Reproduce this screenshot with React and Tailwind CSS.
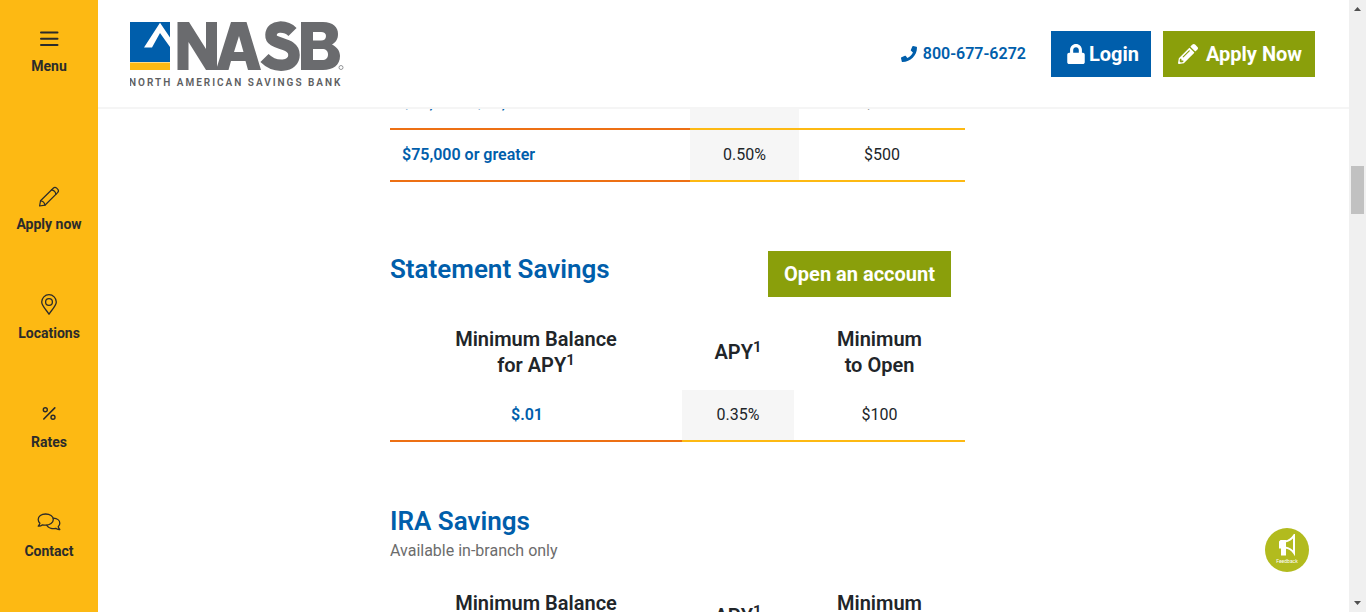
import React from "react";
import { FaLock, FaPhone, FaPencilAlt } from "react-icons/fa";

const line = { fill: "none", stroke: "currentColor", strokeWidth: 1.3, strokeLinejoin: "round", strokeLinecap: "round" };

function MenuIcon() {
  return (
    <svg className="h-6 w-6" viewBox="0 0 24 24" {...line} strokeWidth="2" aria-hidden="true">
      <path d="M4 5.5H20.5M4 11.8H20.5M4 18H20.5" />
    </svg>
  );
}

function PencilIcon() {
  return (
    <svg className="h-6 w-6" viewBox="0 0 24 24" {...line} strokeWidth="1.200" aria-hidden="true">
      <path d="M2.600 22l.9-5.200L16.200 4.200c1-1 2.500-1 3.500 0l.9.900c1 1 1 2.500 0 3.500L7.900 21.200z" />
      <path d="M14.500 5.900c2.200.3 4 2.100 4.400 4.400M3.500 16.800c2.300.2 4.100 2 4.400 4.400" />
    </svg>
  );
}

function PinIcon() {
  return (
    <svg className="h-6 w-6" viewBox="0 0 24 24" {...line} aria-hidden="true">
      <path d="M12 21.200C10.500 18.400 4.700 12.900 4.700 9a7.300 7.300 0 0 1 14.600 0C19.300 12.900 13.500 18.400 12 21.200z" />
      <circle cx="12" cy="9" r="3.400" />
    </svg>
  );
}

function PercentIcon() {
  return (
    <svg className="h-6 w-6" viewBox="0 0 24 24" {...line} strokeWidth="1.4" aria-hidden="true">
      <path d="M17.800 5.900L6.800 17" strokeWidth="1.600" />
      <circle cx="8.300" cy="7.700" r="2" />
      <circle cx="16" cy="15.200" r="2" />
    </svg>
  );
}

function ChatIcon() {
  return (
    <svg className="h-6 w-6" viewBox="0 1 24 24" {...line} aria-hidden="true">
      <path d="M8.600 4C4.400 4 1.200 6.400 1.200 9.500c0 1.500.7 2.700 1.700 3.700-.2 1.200-.9 2.100-1.700 2.900 1.500.2 3.200-.4 4.300-1.300 1 .3 2 .4 3.100.4 4.300 0 7.700-2.500 7.700-5.700S12.900 4 8.600 4z" />
      <path d="M16.500 8.200c3.600.2 6.300 2.300 6.300 5.100 0 1.300-.6 2.500-1.600 3.400.2 1.100.8 2 1.600 2.800-1.500.2-3-.3-4.100-1.200-3.600.9-7.400-.4-8.900-2.900" />
    </svg>
  );
}

const navItems = [
  { label: "Apply now", Icon: PencilIcon },
  { label: "Locations", Icon: PinIcon },
  { label: "Rates", Icon: PercentIcon },
  { label: "Contact", Icon: ChatIcon },
];

const navClass = "flex h-[109px] w-full flex-col items-center pt-[27px] text-sm font-bold leading-5 text-[#2b2b2b]";

function Sidebar() {
  return (
    <nav className="flex w-[98px] shrink-0 flex-col bg-[#fdb913]" aria-label="Main">
      <button type="button" className={navClass}>
        <MenuIcon />
        <span className="mt-[5px]">Menu</span>
      </button>
      <div className="mt-12">
        {navItems.map(({ label, Icon }) => (
          <a key={label} href="#" className={navClass}>
            <Icon />
            <span className="mt-[6px]">{label}</span>
          </a>
        ))}
      </div>
    </nav>
  );
}

function Logo() {
  return (
    <svg className="h-[68px] w-[216px]" viewBox="0 0 216 68" role="img" aria-label="NASB North American Savings Bank">
      <rect x="0" y="2" width="40" height="40" fill="#005eab" />
      <rect x="0" y="42.500" width="40" height="7.500" fill="#fdb913" />
      <path d="M14 27.500L30 2.700L40 17.500V27L30 13L22 27.500z" fill="#fff" />
      <g fill="#6a6b6e">
        <path d="M47.500 2H59L76 29V2H87V50H76L58.500 22V50H47.500z" />
        <path fillRule="evenodd" d="M101 2H116.500L131 50H118L115.500 41H101L98.500 50H86zM109 16L104 32H113.500z" />
        <path fillRule="evenodd" d="M171 2H193C203 2 208 7 208 14C208 19 206 22 202 24.500C207 27 210 31 210 36C210 45 203 50 193 50H171zM183 12V20.500H191C194 20.500 196 19 196 16C196 13.500 194 12 191 12zM183 29V40H192C196 40 198 38 198 34.500C198 31 196 29 192 29z" />
      </g>
      <path d="M162.500 12C156 5.500 141.500 4.500 141 15C140.500 26 164 21 164 35C164 47.500 145 48.500 134.500 38" fill="none" stroke="#6a6b6e" strokeWidth="11.500" />
      <circle cx="211" cy="47.500" r="2" fill="none" stroke="#8a8b8e" strokeWidth="0.900" />
      <text x="-1" y="66" fill="#5d5e61" className="font-['Roboto',sans-serif] text-[10px] font-semibold tracking-[0.2em]">
        NORTH AMERICAN SAVINGS BANK
      </text>
    </svg>
  );
}

function Header() {
  return (
    <header className="flex h-[109px] shrink-0 items-center border-b-2 border-[#f5f5f5] bg-white pl-8 pr-[34px]">
      <a href="#" className="block"><Logo /></a>
      <a href="tel:8006776272" className="ml-auto flex items-center gap-1.5 font-semibold text-[#005eab]">
        <FaPhone className="h-4 w-4" aria-hidden="true" />
        800-677-6272
      </a>
      <button type="button" className="ml-[25px] flex h-[46px] items-center bg-[#005eab] pl-4 pr-3 text-xl font-bold text-white">
        <FaLock className="mr-1 h-5 w-[18px]" aria-hidden="true" />
        Login
      </button>
      <button type="button" className="ml-3 flex h-[46px] items-center bg-[#8a9f0b] pl-[15px] pr-[13px] text-xl font-bold text-white">
        <FaPencilAlt className="mr-2 h-5 w-5" aria-hidden="true" />
        Apply Now
      </button>
    </header>
  );
}

function Row({ tier, apy, open, left }) {
  const tierClass = "border-b-2 border-[#ed7014] pl-3 font-semibold text-[#005eab]";
  return (
    <tr className="h-[52px]">
      <td className={tierClass + (left ? " pr-3 text-left" : " pr-[30px]")}>{tier}</td>
      <td className="border-b-2 border-[#fdb913] bg-[#f6f6f6]">{apy}</td>
      <td className="border-b-2 border-[#fdb913]">{open}</td>
    </tr>
  );
}

function RateTable({ rows }) {
  return (
    <table className="w-full table-fixed border-separate border-spacing-0 text-center">
      <colgroup>
        <col className="w-[292px]" />
        <col className="w-[112px]" />
        <col />
      </colgroup>
      <thead>
        <tr className="h-[76px] text-xl leading-[26px]">
          <th className="font-semibold">Minimum Balance<br />for APY<sup className="text-[15px]">1</sup></th>
          <th className="font-semibold">APY<sup className="text-[15px]">1</sup></th>
          <th className="font-semibold">Minimum<br />to Open</th>
        </tr>
      </thead>
      <tbody>{rows.map((r) => <Row key={r.tier} {...r} />)}</tbody>
    </table>
  );
}

function Feedback() {
  return (
    <button type="button" className="absolute bottom-10 right-10 flex h-11 w-11 flex-col items-center rounded-full bg-[#b2bb1e] pt-1.5 text-white">
      <svg className="h-6 w-5" viewBox="0 0 20 24" aria-hidden="true">
        <path d="M8 7.500C12 7 15 4.500 17 1.500V19C15 16 12 14 8 13.500" fill="none" stroke="#fff" strokeWidth="2" />
        <path d="M3.500 6H9V21.500H4V14.500H2V7.500z" fill="#fff" />
      </svg>
      <span className="text-[5px] leading-[6px]">Feedback</span>
    </button>
  );
}

function ScrollTrack() {
  return (
    <div className="flex w-[17px] shrink-0 flex-col items-center justify-between bg-[#f0f0f0] py-[7px]" aria-hidden="true">
      <svg className="h-1 w-[7px]" viewBox="0 0 7 4"><path d="M0 4L3.500 0L7 4z" fill="#505050" /></svg>
      <div className="flex w-[13px] flex-1 flex-col">
        <div className="grow-[155]" />
        <div className="h-12 bg-[#c1c1c1]" />
        <div className="grow-[387]" />
      </div>
      <svg className="h-1 w-[7px]" viewBox="0 0 7 4"><path d="M0 0L3.500 4L7 0z" fill="#505050" /></svg>
    </div>
  );
}

export default function App() {
  return (
    <div className="flex h-screen overflow-hidden bg-white font-['Roboto',sans-serif] text-base text-[#212529]">
      <Sidebar />
      <div className="relative flex min-w-0 flex-1 flex-col">
        <Header />
        <main className="min-h-0 flex-1 overflow-hidden">
          <div className="mx-auto max-w-[667px]">
            <div className="max-w-[575px]">
              <table className="-mt-[31px] w-full table-fixed border-separate border-spacing-0 text-center">
                <colgroup>
                  <col className="w-[300px]" />
                  <col className="w-[109px]" />
                  <col />
                </colgroup>
                <tbody>
                  <Row tier="$50,000 - $74,999" apy="0.45%" open="$500" left />
                  <Row tier="$75,000 or greater" apy="0.50%" open="$500" left />
                </tbody>
              </table>

              <section className="mt-[69px]">
                <div className="mb-[17px] flex items-start justify-between pr-3.5">
                  <h2 className="mt-0.5 text-[26px] font-semibold leading-8 text-[#005eab]">Statement Savings</h2>
                  <a href="#" className="flex h-[46px] items-center bg-[#8a9f0b] px-4 text-xl font-bold text-white">Open an account</a>
                </div>
                <RateTable rows={[{ tier: "$.01", apy: "0.35%", open: "$100" }]} />
              </section>

              <section className="mt-[63px]">
                <h2 className="text-[26px] font-semibold leading-8 text-[#005eab]">IRA Savings</h2>
                <p className="mb-[15px] mt-0.5 text-[#6c6c6c]">Available in-branch only</p>
                <RateTable rows={[{ tier: "$.01", apy: "0.35%", open: "$100" }]} />
              </section>
            </div>
          </div>
        </main>
        <Feedback />
      </div>
      <ScrollTrack />
    </div>
  );
}
